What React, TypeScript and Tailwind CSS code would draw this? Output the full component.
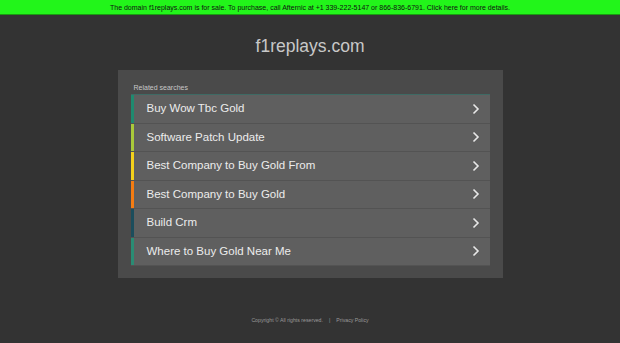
import React from "react";

const searches = [
  { label: "Buy Wow Tbc Gold", color: "bg-[#1f8a6f]" },
  { label: "Software Patch Update", color: "bg-[#a9c93a]" },
  { label: "Best Company to Buy Gold From", color: "bg-[#f3d11c]" },
  { label: "Best Company to Buy Gold", color: "bg-[#f47c12]" },
  { label: "Build Crm", color: "bg-[#1b4d5c]" },
  { label: "Where to Buy Gold Near Me", color: "bg-[#2a8c74]" },
];

const Chevron = () => (
  <svg width="8" height="12" viewBox="0 0 8 12" fill="none">
    <path d="M1.5 1.5 6 6l-4.5 4.5" stroke="#e8e8e8" strokeWidth="1.6" />
  </svg>
);

const App = () => {
  return (
    <div className="flex flex-col min-h-[343px] bg-[#333333] font-['Liberation_Sans',Arial,sans-serif]">
      <div className="h-[15px] bg-[#22f51a] border-b border-[#1a9a12] flex items-center justify-center text-[7px] text-[#111] leading-none">
        The domain f1replays.com is for sale. To purchase, call Afternic at +1 339-222-5147 or 866-836-6791. Click here for more details.
      </div>
      <h1 className="mt-[20px] text-center text-[17.5px] leading-[22px] text-[#c8c8c8]">f1replays.com</h1>
      <div className="mt-[13px] mx-auto w-[385px] h-[208px] bg-[#4a4a4a] pt-[13px] px-[13px]">
        <p className="text-[7px] leading-[9px] text-[#c8c8c8] ml-[3px]">Related searches</p>
        <ul className="mt-[2px] border-t border-[#3e6a64]">
          {searches.map((s) => (
            <li
              key={s.label}
              className="flex items-stretch h-[28.5px] bg-[#5f5f5f] border-b border-[#535353]"
            >
              <span className={`w-[3px] ${s.color}`} />
              <span className="flex-1 flex items-center pl-[13px] text-[11.5px] text-[#ececec]">{s.label}</span>
              <span className="flex items-center pr-[10px]">
                <Chevron />
              </span>
            </li>
          ))}
        </ul>
      </div>
      <footer className="mt-[39px] flex justify-center gap-[6px] text-[5.2px] text-[#9a9a9a]">
        <span>Copyright © All rights reserved.</span>
        <span>|</span>
        <span>Privacy Policy</span>
      </footer>
    </div>
  );
};

export default App;
